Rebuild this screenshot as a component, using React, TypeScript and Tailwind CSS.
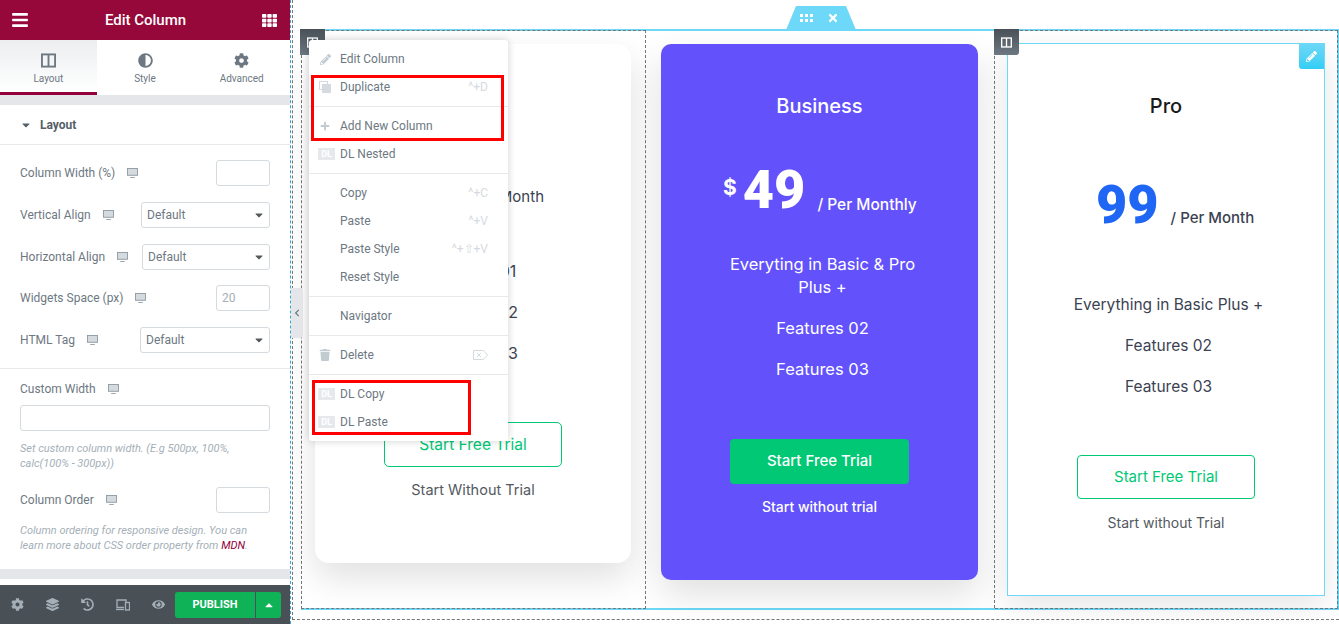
import React from 'react';
import {
  FaAdjust,
  FaBars,
  FaCaretDown,
  FaCaretUp,
  FaChevronLeft,
  FaCog,
  FaEye,
  FaHistory,
  FaLayerGroup,
  FaPencilAlt,
  FaPlus,
  FaTh,
  FaTimes,
  FaTrash,
} from 'react-icons/fa';

const Columns = ({ className = '' }: { className?: string }) => (
  <svg viewBox="0 0 16 16" className={className} fill="none" stroke="currentColor" strokeWidth="2">
    <rect x="1" y="1.5" width="14" height="13" />
    <path d="M8 1.5v13" />
  </svg>
);

const Grip = () => (
  <svg viewBox="0 0 14 8" className="h-2 w-[14px]" fill="white">
    {[0, 5, 10].map((x) => (
      <g key={x}>
        <rect x={x} width="3" height="3" />
        <rect x={x} y="5" width="3" height="3" />
      </g>
    ))}
  </svg>
);

const Monitor = () => (
  <svg viewBox="0 0 12 11" className="h-[10px] w-[11px] shrink-0 text-[#8d99a3]" fill="none" stroke="currentColor">
    <rect x="0.5" y="0.5" width="11" height="7.5" fill="#d5dadf" />
    <path d="M3.5 10.5h5" />
  </svg>
);

const Devices = () => (
  <svg viewBox="0 0 14 12" className="h-3 w-[14px]" fill="none" stroke="#a4afb7" strokeWidth="1.3">
    <path d="M8 8.5H1V1h9v2" />
    <path d="M0 10.5h8" />
    <rect x="9.5" y="3.5" width="4" height="7.5" />
  </svg>
);

const Backspace = () => (
  <svg viewBox="0 0 15 10" className="h-[10px] w-[15px]" fill="none" stroke="#d5dadf">
    <path d="M0.5 0.5h10l4 4.5-4 4.5h-10z" />
    <path d="M4 3l4 4M8 3l-4 4" />
  </svg>
);

const Duplicate = () => (
  <svg viewBox="0 0 12 12" className="mr-[9px] h-[12px] w-[12px]">
    <rect x="0.5" y="0.5" width="8" height="8" fill="none" stroke="#d5dadf" />
    <rect x="3" y="3" width="9" height="9" fill="#d5dadf" />
  </svg>
);

function Label({ text }: { text: string }) {
  return (
    <div className="flex items-center gap-[12px] text-[12px] text-[#6d7882]">
      <span>{text}</span>
      <Monitor />
    </div>
  );
}

function NumberRow({ text, value, className = '' }: { text: string; value?: string; className?: string }) {
  return (
    <div className={`flex h-[26px] items-center justify-between ${className}`}>
      <Label text={text} />
      <div className="flex h-[26px] w-[54px] items-center rounded-[3px] border border-[#d5dadf] px-[5px] text-[12px] text-[#a4afb7]">
        {value}
      </div>
    </div>
  );
}

function SelectRow({ text, width }: { text: string; width: string }) {
  return (
    <div className="mt-[16px] flex h-[26px] items-center justify-between">
      <Label text={text} />
      <div className={`flex h-[26px] items-center justify-between rounded-[3px] border border-[#d5dadf] pl-[5px] pr-[4px] text-[12px] text-[#6d7882] ${width}`}>
        Default
        <FaCaretDown className="text-[12px] text-[#55595c]" />
      </div>
    </div>
  );
}

function Tab({ icon, text, active }: { icon: React.ReactNode; text: string; active?: boolean }) {
  return (
    <div
      className={`flex h-[55px] w-[97px] flex-col items-center pt-[12px] text-[#6d7882] ${
        active ? 'border-b-[3px] border-[#93003c] bg-gradient-to-b from-[#eceef0] to-white' : ''
      }`}
    >
      <div className="flex h-[16px] items-center text-[15px]">{icon}</div>
      <span className="mt-[5px] text-[10px] leading-[12px]">{text}</span>
    </div>
  );
}

function Sidebar() {
  return (
    <aside className="relative z-20 flex h-full w-[290px] shrink-0 flex-col bg-white font-['Roboto',sans-serif]">
      <header className="flex h-[40px] items-center justify-between bg-[#96073a] pl-[11px] pr-[13px] text-white">
        <FaBars className="text-[18px]" />
        <span className="text-[15px] font-medium">Edit Column</span>
        <FaTh className="text-[15px]" />
      </header>
      <nav className="flex">
        <Tab active text="Layout" icon={<Columns className="h-[15px] w-[15px]" />} />
        <Tab text="Style" icon={<FaAdjust />} />
        <Tab text="Advanced" icon={<FaCog />} />
      </nav>
      <div className="h-[10px] bg-[#e4e6e9]" />
      <div className="flex h-[40px] items-center gap-[8px] border-b border-[#e6e9ec] pl-[20px] text-[12px] font-bold text-[#556068]">
        <FaCaretDown className="text-[12px] text-[#556068]" />
        Layout
      </div>
      <div className="border-b border-[#e6e9ec] px-[20px] pb-[15px] pt-[15px]">
        <NumberRow text="Column Width (%)" />
        <SelectRow text="Vertical Align" width="w-[129px]" />
        <SelectRow text="Horizontal Align" width="w-[128px]" />
        <NumberRow text="Widgets Space (px)" value="20" className="mt-[15px]" />
        <SelectRow text="HTML Tag" width="w-[130px]" />
      </div>
      <div className="px-[20px] pt-[11px]">
        <Label text="Custom Width" />
        <div className="mt-[7px] h-[26px] rounded-[3px] border border-[#d5dadf]" />
        <p className="mt-[10px] text-[11px] italic leading-[15px] text-[#a4afb7]">
          Set custom column width. (E.g 500px, 100%, calc(100% - 300px))
        </p>
        <NumberRow text="Column Order" className="mt-[16px]" />
        <p className="mt-[10px] text-[11px] italic leading-[15px] text-[#a4afb7]">
          Column ordering for responsive design. You can learn more about CSS order property from{' '}
          <span className="text-[#93003c]">MDN</span>.
        </p>
      </div>
      <div className="mt-[16px] h-[10px] bg-[#e4e6e9]" />
      <footer className="mt-auto flex h-[39px] items-center bg-[#495157] pl-[11px] text-[13px] text-[#a4afb7]">
        <div className="flex w-[164px] items-center gap-[22px]">
          <FaCog />
          <FaLayerGroup />
          <FaHistory />
          <Devices />
          <FaEye />
        </div>
        <div className="flex h-[26px] w-[80px] items-center justify-center rounded-l-[3px] bg-[#0fb257] pt-[2px] text-[11px] font-bold text-white">
          PUBLISH
        </div>
        <div className="ml-px flex h-[26px] w-[25px] items-center justify-center rounded-r-[3px] bg-[#0fb257] text-[12px] text-white">
          <FaCaretUp />
        </div>
      </footer>
    </aside>
  );
}

function MenuItem({ icon, text, shortcut }: { icon?: React.ReactNode; text: string; shortcut?: React.ReactNode }) {
  return (
    <div className="flex h-[28px] items-center pr-[20px] text-[12px] text-[#6d7882]">
      <div className="flex w-[31px] justify-end text-[#c2cbd2]">{icon}</div>
      <span>{text}</span>
      <span className="ml-auto text-[12px] text-[#d5dadf]">{shortcut}</span>
    </div>
  );
}

const Dl = () => (
  <span className="mr-[5px] flex h-[12px] w-[17px] items-center justify-center bg-[#e6e9ec] text-[9px] font-bold leading-none text-white">
    DL
  </span>
);

function ContextMenu() {
  const group = 'border-b border-[#e6e9ec] py-[5px] last:border-b-0';
  return (
    <div className="absolute left-[18px] top-[40px] z-10 w-[199px] rounded-[3px] bg-white font-['Roboto',sans-serif] shadow-[0_0_8px_rgba(0,0,0,0.18)]">
      <div className={group}>
        <MenuItem icon={<FaPencilAlt className="mr-[9px] text-[11px]" />} text="Edit Column" />
        <MenuItem icon={<Duplicate />} text="Duplicate" shortcut="^+D" />
      </div>
      <div className={group}>
        <MenuItem icon={<FaPlus className="mr-[10px] text-[10px]" />} text="Add New Column" />
        <MenuItem icon={<Dl />} text="DL Nested" />
      </div>
      <div className={group}>
        <MenuItem text="Copy" shortcut="^+C" />
        <MenuItem text="Paste" shortcut="^+V" />
        <MenuItem text="Paste Style" shortcut="^+⇧+V" />
        <MenuItem text="Reset Style" />
      </div>
      <div className={group}>
        <MenuItem text="Navigator" />
      </div>
      <div className={group}>
        <MenuItem icon={<FaTrash className="mr-[9px] text-[12px]" />} text="Delete" shortcut={<Backspace />} />
      </div>
      <div className={group}>
        <MenuItem icon={<Dl />} text="DL Copy" />
        <MenuItem icon={<Dl />} text="DL Paste" />
      </div>
    </div>
  );
}

function ColumnHandle({ className }: { className: string }) {
  return (
    <div className={`absolute z-[5] flex h-[26px] w-[25px] items-center justify-center rounded-br-[3px] bg-gradient-to-b from-[#495157] to-[#6d7882] text-white ${className}`}>
      <Columns className="h-[11px] w-[11px]" />
    </div>
  );
}

function Canvas() {
  return (
    <main className="relative flex-1 overflow-hidden bg-white font-['Inter',sans-serif]">
      <div className="ml-[1px] h-[620px] border-b border-l border-dashed border-[#777]">
        <div className="ml-[8px] pt-[29px]">
          <div className="relative flex h-[581px] w-[1038px] border-y-2 border-r-2 border-[#6dd8f7]">
            <div className="absolute left-[485px] top-[-25px] h-[24px] w-[70px] rounded-t-[5px] bg-[#6dd8f7] [clip-path:polygon(10px_0,60px_0,70px_100%,0_100%)]">
              <div className="flex h-full items-center justify-center gap-[13px] pr-[3px] text-[12px] text-white">
                <Grip />
                <FaTimes />
              </div>
            </div>

            <section className="-mt-px h-[579px] w-[345px] shrink-0 border border-dashed border-[#777] pl-[13px] pt-[13px]">
              <div className="h-[519px] w-[316px] rounded-[14px] bg-white pt-[138px] text-center text-[#3b4252] shadow-[0_15px_35px_rgba(0,0,0,0.12)]">
                <div className="flex h-[30px] items-center justify-end pr-[87px] text-[15px]">/ Per Month</div>
                <div className="mt-[39px] text-[16px] leading-[41px]">Features 01</div>
                <div className="text-[16px] leading-[41px]">Features 02</div>
                <div className="text-[16px] leading-[41px]">Features 03</div>
                <div className="mx-auto mt-[48px] flex h-[45px] w-[178px] items-center justify-center rounded-[5px] border border-[#00c875] text-[15.5px] text-[#00c875]">
                  Start Free Trial
                </div>
                <div className="mt-[12px] text-[14.5px] leading-[22px] text-[#54595f]">Start Without Trial</div>
              </div>
            </section>

            <section className="h-full w-[349px] shrink-0 border-r border-dashed border-[#777] pl-[15px] pt-[13px]">
              <div className="h-[536px] w-[317px] rounded-[10px] bg-[#6352fb] pt-[48px] text-center text-white shadow-[0_15px_35px_rgba(0,0,0,0.12)]">
                <div className="text-[20px] font-medium leading-[28px]">Business</div>
                <div className="mt-[40px] flex h-[60px] items-end pl-[62px]">
                  <span className="mb-[18px] text-[21px] font-bold leading-[28px]">$</span>
                  <span className="ml-[6px] font-['Roboto',sans-serif] text-[54px] font-black leading-[60px]">49</span>
                  <span className="mb-[4px] ml-[12px] text-[15.5px] font-medium leading-[22px]">/ Per Monthly</span>
                </div>
                <div className="mt-[33px] pl-[66px] pr-[60px] text-[16.5px] leading-[23px]">Everyting in Basic &amp; Pro Plus +</div>
                <div className="mt-[18px] pl-[6px] text-[16.5px] leading-[23px]">Features 02</div>
                <div className="mt-[18px] pl-[6px] text-[16.5px] leading-[23px]">Features 03</div>
                <div className="ml-[69px] mt-[58px] flex h-[45px] w-[179px] items-center justify-center rounded-[4px] bg-[#00c875] text-[15px] font-medium">
                  Start Free Trial
                </div>
                <div className="mt-[12px] text-[14px] font-medium leading-[22px]">Start without trial</div>
              </div>
            </section>

            <section className="-mt-px h-[579px] w-[343px] shrink-0 border-y border-r border-dashed border-[#777] pl-[12px] pt-[12px]">
              <div className="relative h-[553px] w-[318px] border border-[#6dd8f7] bg-white pt-[48px] text-center text-[#3b4252] shadow-[0_10px_30px_rgba(0,0,0,0.1)]">
                <div className="absolute right-0 top-[-1px] flex h-[26px] w-[25px] items-center justify-center rounded-bl-[3px] bg-gradient-to-b from-[#6dd8f7] to-[#32cdf5] text-[11px] text-white">
                  <FaPencilAlt />
                </div>
                <div className="text-[20px] font-medium leading-[28px] text-[#1a1a1a]">Pro</div>
                <div className="mt-[55px] flex h-[60px] items-end pl-[88px]">
                  <span className="font-['Roboto',sans-serif] text-[54px] font-black leading-[60px] text-[#1f66f5]">99</span>
                  <span className="mb-[6px] ml-[12px] text-[15px] font-medium leading-[22px]">/ Per Month</span>
                </div>
                <div className="mt-[58px] pl-[5px] text-[15.5px] leading-[23px]">Everything in Basic Plus +</div>
                <div className="mt-[18px] pl-[5px] text-[15.5px] leading-[23px]">Features 02</div>
                <div className="mt-[18px] pl-[5px] text-[15.5px] leading-[23px]">Features 03</div>
                <div className="ml-[69px] mt-[57px] flex h-[44px] w-[178px] items-center justify-center rounded-[4px] border border-[#00c875] text-[15px] text-[#00c875]">
                  Start Free Trial
                </div>
                <div className="mt-[13px] text-[14px] leading-[22px] text-[#54595f]">Start without Trial</div>
              </div>
            </section>
          </div>
        </div>
      </div>

      <ColumnHandle className="left-[9px] top-[29px]" />
      <ColumnHandle className="left-[703px] top-[29px]" />
      <ContextMenu />
      <div className="absolute left-[20px] top-[75px] z-10 h-[66px] w-[193px] border-[3px] border-[#fe0000]" />
      <div className="absolute left-[21px] top-[380px] z-10 h-[55px] w-[159px] border-[3px] border-[#fe0000]" />
      <div className="absolute left-0 top-[288px] flex h-[50px] w-[12px] items-center justify-center rounded-r-[3px] bg-[#e4e6e9] text-[8px] text-[#6d7882]">
        <FaChevronLeft />
      </div>
    </main>
  );
}

export default function App() {
  return (
    <div className="flex h-[624px] w-[1339px] overflow-hidden">
      <Sidebar />
      <div className="w-px shrink-0 border-l border-dashed border-[#3aa6d0]" />
      <Canvas />
    </div>
  );
}
